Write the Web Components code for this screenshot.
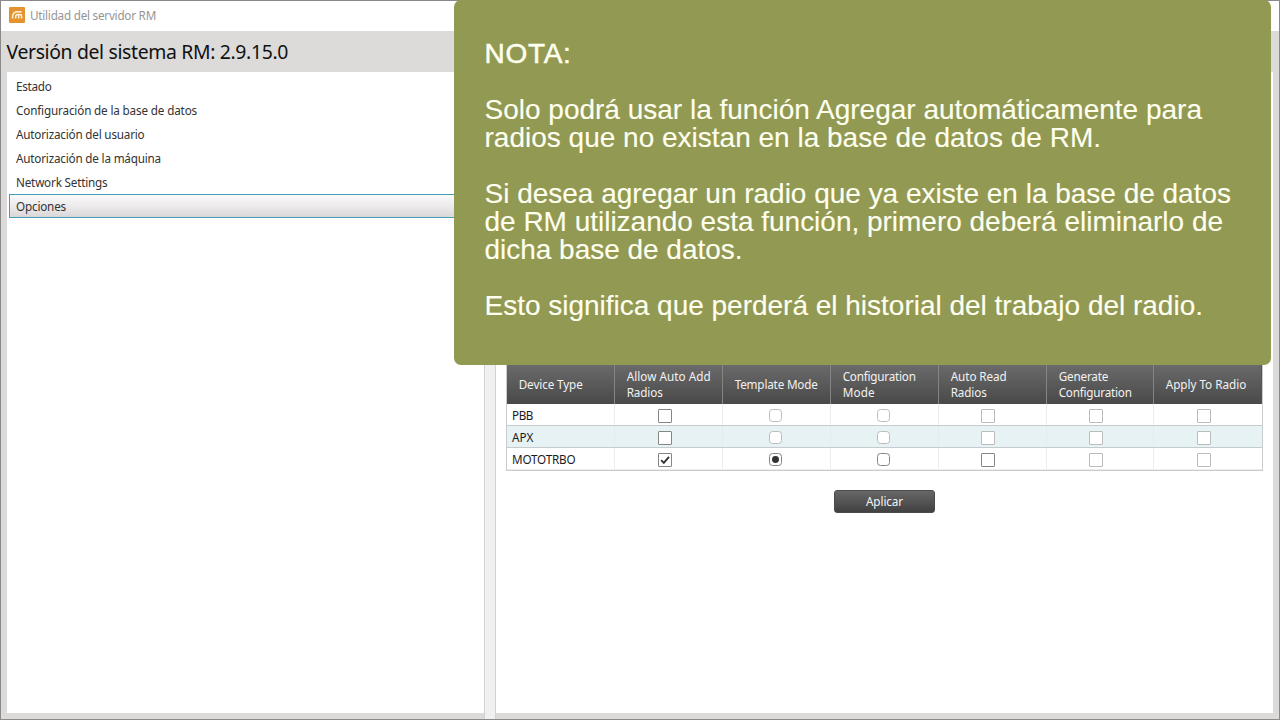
<!DOCTYPE html>
<html lang="es">
<head>
<meta charset="utf-8">
<title>Utilidad del servidor RM</title>
<style>
html,body{margin:0;width:1280px;height:720px;overflow:hidden;background:#fff;font-family:"Noto Sans","Open Sans",sans-serif;}
</style>
</head>
<body>
<rm-app></rm-app>
<script>
const define = (name, html, setup) => {
  const t = document.createElement('template');
  t.innerHTML = html;
  customElements.define(name, class extends HTMLElement {
    connectedCallback() {
      if (this.shadowRoot) return;
      this.attachShadow({mode: 'open'}).append(t.content.cloneNode(true));
      if (setup) setup(this, this.shadowRoot);
    }
  });
};

// One line of text tracked to the width given in its "w" attribute.
define('fit-text', `<style>:host{display:block;width:max-content;white-space:pre}span{display:inline-block;white-space:pre}</style><span><slot></slot></span>`, (el, root) => {
  const span = root.querySelector('span');
  const fit = () => {
    const n = el.textContent.length;
    span.style.letterSpacing = '0px';
    const w = span.getBoundingClientRect().width;
    if (w) span.style.letterSpacing = ((+el.getAttribute('w') - w) / n).toFixed(3) + 'px';
  };
  fit();
  requestAnimationFrame(fit);
});

define('title-bar', `<style>
:host{display:flex;align-items:center;box-sizing:border-box;height:30px;padding:0 0 2px 8px;gap:4px;background:#fff;color:#959595;font-size:11.7px;line-height:16px}
svg{display:block}</style>
<svg width="17" height="16" viewBox="0 0 17 16"><rect width="16" height="16" rx="1" fill="#e5932f"/>
<path d="M3.6 11.6V9.6C3.6 6.2 5.6 4.7 8.8 4.7H12.6M6.7 11.6V9.6C6.7 8.2 7.6 7.5 9 7.5H11C12.1 7.5 12.6 8.1 12.6 9.1V11.6M9.7 11.6V8" fill="none" stroke="#fff3dc" stroke-width="1.5"/></svg>
<fit-text w="126">Utilidad del servidor RM</fit-text>`);

define('version-bar', `<style>:host{display:flex;align-items:center;box-sizing:border-box;height:41px;padding:0 0 0 5.5px;background:#dcdbda;color:#111;font-size:19.4px;line-height:26px}</style>
<fit-text w="281.5">Versión del sistema RM: 2.9.15.0</fit-text>`);

define('menu-item', `<style>
:host{display:flex;align-items:center;box-sizing:border-box;height:24px;padding-left:6px;color:#333;font-size:11.7px;line-height:16px;border:1px solid transparent}
:host([selected]){border-color:#419fb8;background:linear-gradient(#fafafa,#ebe9ea 55%,#d9d7d8) padding-box}
</style><slot></slot>`);

define('side-menu', `<style>:host{display:block;box-sizing:border-box;padding:2px 2px;background:#fff}</style><slot></slot>`);

define('check-mark', `<style>
:host{display:block;box-sizing:border-box;width:14px;height:14px;border:1px solid #858585;border-radius:1px;background:#fff;position:relative;top:1px}
:host([radio]){width:13px;height:13px;border-radius:3.5px;top:.5px;left:2px}
:host([shift]){left:-1px}
:host([off]){border-color:#bcbcbc}
svg{display:none}
:host([checked]) svg{display:block}
:host([checked]:not([radio])) circle,:host([checked][radio]) path{display:none}
</style><svg viewBox="0 0 12 12"><path d="M2.2 6.2 4.8 8.9 10 2.8" fill="none" stroke="#333" stroke-width="1.9"/><circle cx="6" cy="6" r="3.8" fill="#333"/></svg>`);

define('grid-head', `<style>
:host{display:flex;flex-direction:column;justify-content:center;box-sizing:border-box;height:40px;padding-left:11.7px;border-right:1px solid #858585;color:#f2f2f2;font-size:11.7px;line-height:16px}
:host([last]){border-right-color:#555}
</style><slot></slot>`);

define('grid-row', `<style>
:host{display:grid;grid-template-columns:subgrid;grid-column:1/-1;box-sizing:border-box;height:22px;border-bottom:1px solid #c6cccd;background:#fff;color:#1c1c1c;font-size:11.7px;line-height:16px}
:host([alt]){background:#e6f2f4}
:host([last]){border-bottom-color:#eceeee}
div{display:flex;align-items:center;justify-content:center;border-right:1px solid #ebeeee;padding-right:7px}
:host([alt]) div{border-right-color:#e0eeef}
.label{justify-content:flex-start;padding-left:5px}
div:last-child{border-right:0}
</style>`, (el, root) => {
  let html = `<div class="label"><fit-text w="${el.getAttribute('w')}">${el.getAttribute('label')}</fit-text></div>`;
  el.getAttribute('cells').split(' ').forEach((c, i) => {
    html += `<div><check-mark${i === 1 || i === 2 ? ' radio' : ''}${i > 2 ? ' shift' : ''}${c === 'off' ? ' off' : ''}${c === 'yes' ? ' checked' : ''}></check-mark></div>`;
  });
  root.innerHTML += html;
});

define('device-grid', `<style>
:host{display:grid;grid-template-columns:108px 108px 108px 108px 108px 107px 108px;box-sizing:border-box;width:757px;border:1px solid #c9cccc;border-top:0}
header{display:grid;grid-template-columns:subgrid;grid-column:1/-1;background:linear-gradient(#6b6b6b,#494949)}
</style>
<header>
<grid-head><fit-text w="64">Device Type</fit-text></grid-head>
<grid-head><fit-text w="84">Allow Auto Add</fit-text><fit-text w="36">Radios</fit-text></grid-head>
<grid-head><fit-text w="83">Template Mode</fit-text></grid-head>
<grid-head><fit-text w="73">Configuration</fit-text><fit-text w="32">Mode</fit-text></grid-head>
<grid-head><fit-text w="56">Auto Read</fit-text><fit-text w="36">Radios</fit-text></grid-head>
<grid-head><fit-text w="49.5">Generate</fit-text><fit-text w="73">Configuration</fit-text></grid-head>
<grid-head last><fit-text w="80.5">Apply To Radio</fit-text></grid-head>
</header>
<grid-row label="PBB" w="21" cells="on off off off off off"></grid-row>
<grid-row alt label="APX" w="21.5" cells="on off off off off off"></grid-row>
<grid-row last label="MOTOTRBO" w="63.5" cells="yes yes on on off off"></grid-row>`);

define('apply-button', `<style>:host{display:flex;align-items:center;justify-content:center;box-sizing:border-box;width:101px;height:23px;padding-bottom:1px;border:1px solid #4a4a4a;border-radius:3px;background:linear-gradient(#676767,#414141);color:#f5f5f5;font-size:11.7px;line-height:16px}</style><slot></slot>`);

define('options-panel', `<style>:host{display:flex;flex-direction:column;box-sizing:border-box;background:#fff;padding:292px 0 0 10px}apply-button{margin:19px 0 0 328px}</style>
<device-grid></device-grid><apply-button><fit-text w="37">Aplicar</fit-text></apply-button>`);

define('note-overlay', `<style>
:host{display:block;box-sizing:border-box;position:absolute;left:454px;top:0;width:817px;height:365px;padding:40px 0 0 30.5px;border-radius:7px;background:#929953;color:#fffff0;font:28px/28px "Liberation Sans",Arial,sans-serif;-webkit-text-stroke:.12px #fffff0}
fit-text{height:28px}
.bold{-webkit-text-stroke-width:.5px}
.gap{margin-top:28px}
</style>
<fit-text class="bold" w="87">NOTA:</fit-text>
<fit-text class="gap" w="717.5">Solo podrá usar la función Agregar automáticamente para</fit-text>
<fit-text w="616.5">radios que no existan en la base de datos de RM.</fit-text>
<fit-text class="gap" w="746.5">Si desea agregar un radio que ya existe en la base de datos</fit-text>
<fit-text w="738.5">de RM utilizando esta función, primero deberá eliminarlo de</fit-text>
<fit-text w="258">dicha base de datos.</fit-text>
<fit-text class="gap" w="718.5">Esto significa que perderá el historial del trabajo del radio.</fit-text>`);

define('rm-app', `<style>
:host{display:flex;flex-direction:column;box-sizing:border-box;width:1280px;height:720px;position:relative;border:1px solid #8b8a89;background:#dcdbda}
main{display:grid;grid-template:641px / 477px 12px 777px;height:641px;padding-left:6px}
.split{box-sizing:border-box;height:647px;background:#f0f0f0;border:solid #d2d2d2;border-width:0 1px}
note-overlay{margin:-1px 0 0 -1px}
</style>
<title-bar></title-bar>
<version-bar></version-bar>
<main>
<side-menu>
<menu-item><fit-text w="35.5">Estado</fit-text></menu-item>
<menu-item><fit-text w="181">Configuración de la base de datos</fit-text></menu-item>
<menu-item><fit-text w="128.5">Autorización del usuario</fit-text></menu-item>
<menu-item><fit-text w="145">Autorización de la máquina</fit-text></menu-item>
<menu-item><fit-text w="91.5">Network Settings</fit-text></menu-item>
<menu-item selected><fit-text w="50">Opciones</fit-text></menu-item>
</side-menu>
<div class="split"></div>
<options-panel></options-panel>
</main>
<note-overlay></note-overlay>`);
</script>
</body>
</html>
